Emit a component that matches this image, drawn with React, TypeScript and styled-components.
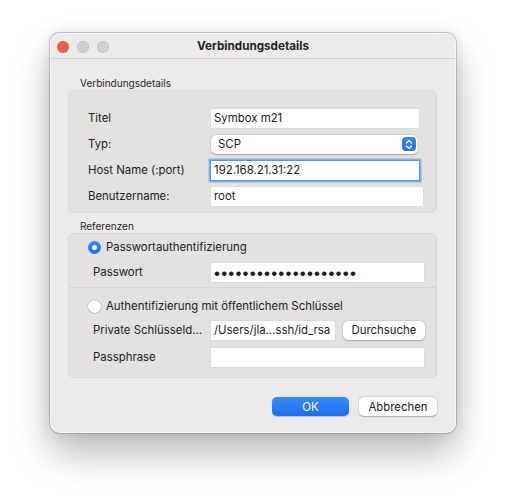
import styled, { createGlobalStyle } from "styled-components";

const GlobalStyle = createGlobalStyle`
  html, body {
    margin: 0;
    background: #ffffff;
  }
  body {
    font-family: Inter, "Liberation Sans", sans-serif;
    color: #222222;
    -webkit-font-smoothing: antialiased;
  }
`;

const Page = styled.div`
  display: flex;
  justify-content: center;
  padding-top: 33px;
  height: 467px;
`;

const Window = styled.div`
  width: 406px;
  height: 400px;
  box-sizing: border-box;
  background: #ecebea;
  border-radius: 10px;
  display: flex;
  flex-direction: column;
  box-shadow: 0 0 0 1px rgba(0, 0, 0, 0.18), inset 0 0 0 1px rgba(255, 255, 255, 0.6),
    0 20px 38px rgba(0, 0, 0, 0.28), 0 0 14px rgba(0, 0, 0, 0.1);
`;

const TitleBar = styled.div`
  position: relative;
  height: 25px;
  display: flex;
  align-items: center;
  justify-content: center;
  border-bottom: 1px solid #d6d5d4;
  font-size: 11.7px;
  font-weight: 700;
  color: #242424;
`;

const Lights = styled.div`
  position: absolute;
  left: 7px;
  top: 8px;
  display: flex;
  gap: 8px;
`;

const Light = styled.span<{ $color: string }>`
  width: 12px;
  height: 12px;
  border-radius: 50%;
  background: ${(p) => p.$color};
  box-shadow: inset 0 0 0 0.5px rgba(0, 0, 0, 0.12);
`;

const Content = styled.div`
  flex: 1;
  display: flex;
  flex-direction: column;
  padding: 18px 19px 0 18px;
`;

const SectionLabel = styled.div<{ $top?: number }>`
  height: 13px;
  line-height: 13px;
  font-size: 10px;
  padding-left: 12px;
  margin-top: ${(p) => p.$top ?? 0}px;
  color: #242424;
`;

const GroupBox = styled.div<{ $pad: string; $gap: number }>`
  background: #e3e2e1;
  border: 1px solid #dad9d8;
  border-radius: 6px;
  padding: ${(p) => p.$pad};
  display: flex;
  flex-direction: column;
  gap: ${(p) => p.$gap}px;
`;

const SubGroup = styled.div<{ $pad: string; $divider?: boolean }>`
  display: flex;
  flex-direction: column;
  padding: ${(p) => p.$pad};
  border-bottom: ${(p) => (p.$divider ? "1px solid #d6d5d4" : "none")};
`;

// field column starts at 142px from the box's inner left edge
const Row = styled.div<{ $indent: number; $mt?: number }>`
  display: grid;
  grid-template-columns: ${(p) => 134 - p.$indent}px max-content max-content;
  justify-content: start;
  align-items: center;
  height: 20px;
  padding-left: ${(p) => p.$indent}px;
  margin-top: ${(p) => p.$mt ?? 0}px;
  column-gap: 8px;
`;

const Label = styled.span`
  font-size: 11.4px;
  color: #202020;
  white-space: nowrap;
`;

const Field = styled.div<{ $w: number; $focus?: boolean }>`
  width: ${(p) => p.$w}px;
  height: 19px;
  box-sizing: border-box;
  background: #ffffff;
  padding-left: 3px;
  font-size: 11.4px;
  line-height: 19px;
  color: #1a1a1a;
  white-space: nowrap;
  overflow: hidden;
  box-shadow: ${(p) =>
    p.$focus
      ? "0 0 0 1px #5e92e4, 0 0 0 2.5px rgba(112, 160, 232, 0.75)"
      : "0 0 0 0.5px rgba(0, 0, 0, 0.06)"};
`;

const Dots = styled.span`
  font-family: "Liberation Sans", sans-serif;
  font-size: 17px;
  letter-spacing: 1.2px;
  position: relative;
  top: 1px;
  color: #1c1c1c;
`;

const Popup = styled.div<{ $w: number }>`
  width: ${(p) => p.$w}px;
  height: 19px;
  box-sizing: border-box;
  background: #ffffff;
  border-radius: 5px;
  display: flex;
  align-items: center;
  justify-content: space-between;
  padding: 0 2px 0 7px;
  font-size: 11.4px;
  color: #1a1a1a;
  box-shadow: 0 0.5px 1.5px rgba(0, 0, 0, 0.25), 0 0 0 0.5px rgba(0, 0, 0, 0.08);
`;

const Stepper = styled.span`
  width: 14px;
  height: 14px;
  border-radius: 4px;
  background: linear-gradient(#3d8af7, #1f6fef);
  display: flex;
  align-items: center;
  justify-content: center;
`;

const RadioRow = styled.label<{ $mt?: number }>`
  display: flex;
  align-items: center;
  gap: 5px;
  height: 20px;
  padding-left: 19px;
  margin-top: ${(p) => p.$mt ?? 0}px;
  font-size: 11.4px;
  color: #202020;
`;

const Radio = styled.span<{ $on?: boolean }>`
  width: 13px;
  height: 13px;
  box-sizing: border-box;
  border-radius: 50%;
  display: flex;
  align-items: center;
  justify-content: center;
  background: ${(p) => (p.$on ? "linear-gradient(#3b88f7, #1e6ff0)" : "#ffffff")};
  box-shadow: ${(p) =>
    p.$on ? "none" : "0 0 0 0.5px rgba(0, 0, 0, 0.2), 0 0.5px 1px rgba(0, 0, 0, 0.15)"};

  &::after {
    content: "";
    display: ${(p) => (p.$on ? "block" : "none")};
    width: 5px;
    height: 5px;
    border-radius: 50%;
    background: #ffffff;
  }
`;

const Button = styled.button<{ $primary?: boolean; $w: number }>`
  width: ${(p) => p.$w}px;
  height: 19px;
  padding: 0;
  border: none;
  border-radius: 5px;
  font-family: inherit;
  font-size: 11.4px;
  color: ${(p) => (p.$primary ? "#ffffff" : "#1a1a1a")};
  background: ${(p) => (p.$primary ? "linear-gradient(#3c89f7, #1c6ef0)" : "#ffffff")};
  box-shadow: ${(p) =>
    p.$primary
      ? "0 0.5px 1px rgba(0, 0, 0, 0.2)"
      : "0 0.5px 1.5px rgba(0, 0, 0, 0.25), 0 0 0 0.5px rgba(0, 0, 0, 0.08)"};
`;

const ButtonBar = styled.div`
  display: flex;
  justify-content: flex-end;
  gap: 10px;
  margin-top: 19px;
`;

const StepperIcon = () => (
  <svg width="8" height="11" viewBox="0 0 8 11" fill="none">
    <path d="M1.5 4 L4 1.5 L6.5 4" stroke="#fff" strokeWidth="1.4" strokeLinecap="round" strokeLinejoin="round" />
    <path d="M1.5 7 L4 9.5 L6.5 7" stroke="#fff" strokeWidth="1.4" strokeLinecap="round" strokeLinejoin="round" />
  </svg>
);

export default function App() {
  return (
    <>
      <GlobalStyle />
      <Page>
        <Window>
          <TitleBar>
            <Lights>
              <Light $color="#ee5f57" />
              <Light $color="#d1d0cf" />
              <Light $color="#d1d0cf" />
            </Lights>
            Verbindungsdetails
          </TitleBar>
          <Content>
            <SectionLabel>Verbindungsdetails</SectionLabel>
            <GroupBox $pad="17px 0 6px 0" $gap={6}>
              <Row $indent={19}>
                <Label>Titel</Label>
                <Field $w={208}>Symbox m21</Field>
              </Row>
              <Row $indent={19}>
                <Label>Typ:</Label>
                <Popup $w={207}>
                  SCP
                  <Stepper>
                    <StepperIcon />
                  </Stepper>
                </Popup>
              </Row>
              <Row $indent={19}>
                <Label>Host Name (:port)</Label>
                <Field $w={208} $focus>
                  192.168.21.31:22
                </Field>
              </Row>
              <Row $indent={19}>
                <Label>Benutzername:</Label>
                <Field $w={212}>root</Field>
              </Row>
            </GroupBox>

            <SectionLabel $top={7}>Referenzen</SectionLabel>
            <GroupBox $pad="0" $gap={0}>
              <SubGroup $pad="3px 0 5px 0" $divider>
                <RadioRow>
                  <Radio $on />
                  Passwortauthentifizierung
                </RadioRow>
                <Row $indent={24} $mt={5}>
                  <Label>Passwort</Label>
                  <Field $w={213}>
                    <Dots>{"•".repeat(20)}</Dots>
                  </Field>
                </Row>
              </SubGroup>
              <SubGroup $pad="8px 0 10px 0">
                <RadioRow>
                  <Radio />
                  Authentifizierung mit öffentlichem Schlüssel
                </RadioRow>
                <Row $indent={24} $mt={4}>
                  <Label>Private Schlüsseld…</Label>
                  <Field $w={124}>/Users/jla…ssh/id_rsa</Field>
                  <Button $w={82}>Durchsuche</Button>
                </Row>
                <Row $indent={24} $mt={7}>
                  <Label>Passphrase</Label>
                  <Field $w={213} />
                </Row>
              </SubGroup>
            </GroupBox>

            <ButtonBar>
              <Button $primary $w={77}>
                OK
              </Button>
              <Button $w={78}>Abbrechen</Button>
            </ButtonBar>
          </Content>
        </Window>
      </Page>
    </>
  );
}
